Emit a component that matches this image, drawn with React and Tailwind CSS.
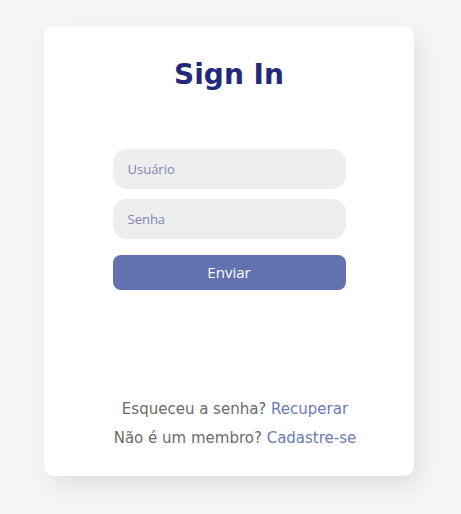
export default function App() {
  return (
    <div className="min-h-[514px] w-full bg-[#f5f5f8] pt-[26px]">
      <div className="ml-[44px] w-[370px] h-[450px] rounded-[10px] bg-white shadow-[6px_10px_20px_rgba(0,0,0,0.08)] flex flex-col items-center">
        <h1 className="mt-[31px] h-[36px] leading-[36px] text-[28px] font-extrabold text-[#22287a]" style={{ fontFamily: '"DejaVu Sans", sans-serif' }}>
          Sign In
        </h1>
        <div className="mt-[56px] w-[233px] flex flex-col" style={{ fontFamily: '"Open Sans", sans-serif' }}>
          <input
            placeholder="Usuário"
            className="h-[40px] rounded-[14px] bg-[#eeeeee] px-[15px] text-[13px] text-[#333] outline-none placeholder:text-[#8085b6]"
          />
          <input
            placeholder="Senha"
            type="password"
            className="mt-[10px] h-[40px] rounded-[14px] bg-[#eeeeee] px-[15px] text-[13px] text-[#333] outline-none placeholder:text-[#8085b6]"
          />
          <button className="mt-[16px] h-[35px] rounded-[8px] bg-[#6272b1] text-white text-[15px]">
            Enviar
          </button>
        </div>
        <div className="mt-auto mb-[28px] pl-[12px] flex flex-col items-center gap-[9px] text-[15px] leading-[20px]" style={{ fontFamily: '"DejaVu Sans", sans-serif' }}>
          <p className="text-[#6b6b6b]">
            Esqueceu a senha? <a className="text-[#6a7bb6]">Recuperar</a>
          </p>
          <p className="text-[#6b6b6b]">
            Não é um membro? <a className="text-[#6a7bb6]">Cadastre-se</a>
          </p>
        </div>
      </div>
    </div>
  );
}
